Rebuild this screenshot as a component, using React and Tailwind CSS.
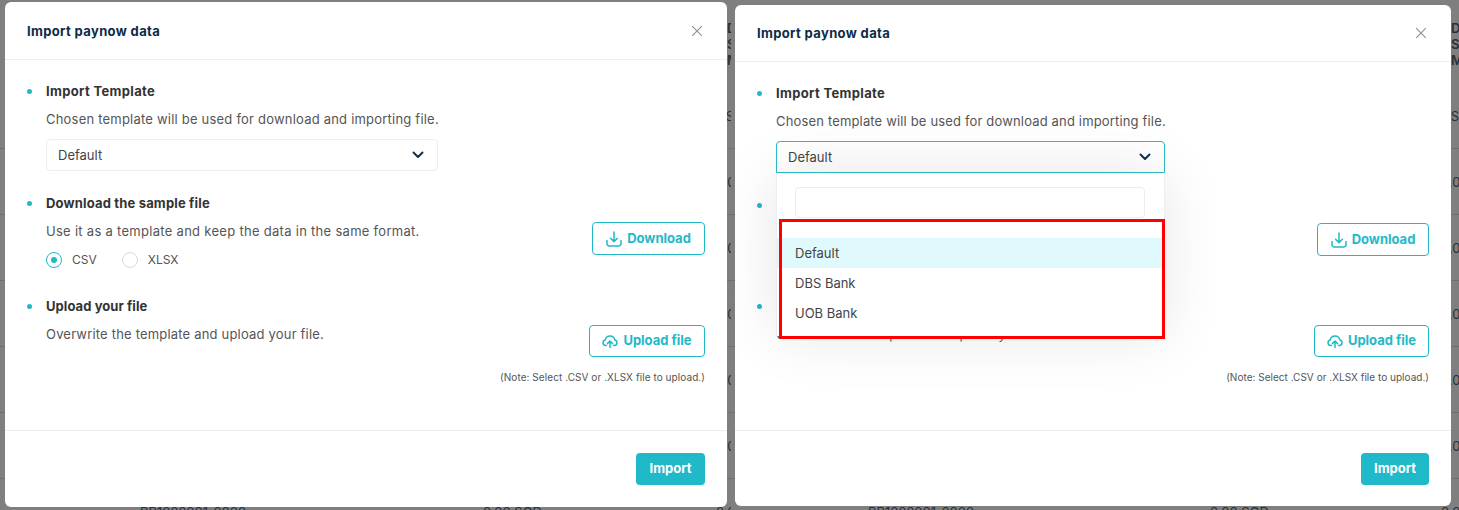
import React from 'react';

const DownloadIcon = ({ className = '' }) => (
    <svg viewBox="0 0 16 16" fill="none" stroke="currentColor" strokeWidth="1.5" strokeLinecap="round" strokeLinejoin="round" className={className} aria-hidden="true">
        <path d="M8 1v9.5M4.6 7.2 8 10.6l3.4-3.4" />
        <path d="M1 9.5v3.2A2.3 2.3 0 0 0 3.3 15h9.4a2.3 2.3 0 0 0 2.3-2.3V9.5" />
    </svg>
);

const UploadIcon = ({ className = '' }) => (
    <svg viewBox="0 0 16 16" fill="none" stroke="currentColor" strokeWidth="1.5" strokeLinecap="round" strokeLinejoin="round" className={className} aria-hidden="true">
        <path d="M4.4 12.6H3.6A2.9 2.9 0 0 1 3.2 6.9a4.9 4.9 0 0 1 9.6 0 2.9 2.9 0 0 1-.4 5.7h-.8" />
        <path d="M8 14.6V8.2M5.4 10.6 8 8l2.6 2.6" />
    </svg>
);

const CloseIcon = () => (
    <svg viewBox="0 0 16 16" fill="none" stroke="currentColor" strokeWidth="1.1" className="h-4 w-4 text-[#8f8f8f]" aria-hidden="true">
        <path d="M3.2 3.2l9.6 9.6M12.8 3.2l-9.6 9.6" />
    </svg>
);

const Chevron = () => (
    <svg viewBox="0 0 12 8" fill="none" stroke="#12304d" strokeWidth="2" strokeLinecap="round" strokeLinejoin="round" className="h-[8px] w-[12px]" aria-hidden="true">
        <path d="M1.5 1.5 6 6l4.5-4.5" />
    </svg>
);

const rows = ['US.', '0.00 SGD', '0.00 SGD', '0.00 SGD', '0.00 SGD', '0.00 SGD'];

// dimmed table behind the modal, only its edges show
function Backdrop({ headerPad, gridClass }) {
    return (
        <div className="text-[13px] leading-[16px] text-[#27303a]">
            <div className={`flex h-[83px] flex-col pt-[20px] font-semibold ${headerPad}`}>
                <span>DI</span>
                <span>S</span>
                <span>M</span>
            </div>
            {rows.map((value, i) => (
                <div key={i} className={`grid h-[66px] items-center border-b border-[#6e6e6e] ${gridClass}`}>
                    <span className="col-start-4 whitespace-nowrap">{value}</span>
                </div>
            ))}
            <div className={`grid h-[66px] items-center ${gridClass}`}>
                <span>BB1022001_0002</span>
                <span>0.00 SGD</span>
                <span>-</span>
                <span className="whitespace-nowrap">0.00 SGD</span>
            </div>
        </div>
    );
}

function Heading({ children, className }) {
    return (
        <div className={`relative h-[20px] text-[13px] font-bold leading-[20px] text-[#333] ${className}`}>
            <span className="absolute left-[-19px] top-[8px] h-[5px] w-[5px] rounded-full bg-[#1fb9c9]" />
            {children}
        </div>
    );
}

const Desc = ({ children, className }) => (
    <div className={`mt-[8px] h-[20px] whitespace-nowrap text-[13px] leading-[20px] text-[#555] ${className}`}>{children}</div>
);

function Radio({ label, checked }) {
    return (
        <div className="flex items-center gap-[10px]">
            <span className={`flex h-[16px] w-[16px] items-center justify-center rounded-full border ${checked ? 'border-[#1fb9c9]' : 'border-[#d9d9d9]'}`}>
                {checked && <span className="h-[6px] w-[6px] rounded-full bg-[#1fb9c9]" />}
            </span>
            <span className="text-[12px] leading-[20px] text-[#555]">{label}</span>
        </div>
    );
}

function OutlineButton({ icon, label, className = '' }) {
    return (
        <button type="button" className={`flex items-center justify-center gap-[5px] rounded-[4px] border border-[#1fb9c9] bg-white text-[13px] font-bold text-[#1fb9c9] ${className}`}>
            {icon}
            {label}
        </button>
    );
}

function Dropdown() {
    return (
        <div className="absolute left-0 top-[32px] z-10 h-[163px] w-[389px] border-x border-[#eeeeee] bg-white pt-[14px] shadow-[0_0_60px_rgba(0,0,0,0.1)]">
            <div className="ml-[18px] h-[31px] w-[350px] rounded-[4px] border border-[#ececec]" />
            <div className="mt-[20px] text-[13px] text-[#444]">
                <div className="h-[30px] bg-[#dff9fc] pl-[18px] leading-[30px]">Default</div>
                <div className="h-[30px] pl-[18px] leading-[30px]">DBS Bank</div>
                <div className="h-[30px] pl-[18px] leading-[30px]">UOB Bank</div>
            </div>
            {/* red annotation round the options */}
            <div className="absolute left-[2px] top-[46px] h-[120px] w-[386px] border-[3px] border-[#ff0000]" />
        </div>
    );
}

function Modal({ open, className, headerClass, footerClass, selectWidth, firstDescClass, noteClass, section2Class, section3Class, downloadClass, uploadClass, importClass }) {
    return (
        <div className={`absolute flex flex-col rounded-[6px] bg-white ${className}`}>
            <div className={`flex shrink-0 items-center justify-between border-b border-[#eeeeee] pl-[22px] pr-[22px] ${headerClass}`}>
                <div className="pt-[2px] text-[13px] font-bold tracking-[0.36px] text-[#0d2b47]">Import paynow data</div>
                <CloseIcon />
            </div>
            <div className="flex-1 pl-[41px] pr-[22px]">
                <div className="pt-[21px]">
                    <Heading className="tracking-[0.34px]">Import Template</Heading>
                    <Desc className={firstDescClass}>Chosen template will be used for download and importing file.</Desc>
                    <div className={`relative mt-[10px] ${selectWidth}`}>
                        <div className={`flex h-[32px] items-center justify-between rounded-[4px] border pl-[11px] pr-[13px] text-[13px] text-[#444] ${open ? 'rounded-b-none border-[#2bbccb]' : 'border-[#eeeeee]'}`}>
                            <span className="pt-[2px]">Default</span>
                            <Chevron />
                        </div>
                        {open && <Dropdown />}
                    </div>
                </div>
                <div className={`flex items-start justify-between ${section2Class}`}>
                    <div>
                        <Heading className="tracking-[0.17px]">Download the sample file</Heading>
                        <Desc className="tracking-[0.29px]">Use it as a template and keep the data in the same format.</Desc>
                        <div className="mt-[9px] flex h-[20px] items-center gap-[25px]">
                            <Radio label="CSV" checked />
                            <Radio label="XLSX" />
                        </div>
                    </div>
                    <OutlineButton icon={<DownloadIcon className="h-4 w-4" />} label="Download" className={`h-[33px] ${downloadClass}`} />
                </div>
                <div className={`flex items-start justify-between ${section3Class}`}>
                    <div>
                        <Heading className="tracking-[0.07px]">Upload your file</Heading>
                        <Desc className="tracking-[0.19px]">Overwrite the template and upload your file.</Desc>
                    </div>
                    <div className="mt-[29px] flex flex-col items-end">
                        <OutlineButton icon={<UploadIcon className="h-4 w-4" />} label="Upload file" className={`h-[32px] ${uploadClass}`} />
                        <div className={`mt-[12px] h-[16px] whitespace-nowrap text-[10px] leading-[16px] text-[#555] ${noteClass}`}>(Note: Select .CSV or .XLSX file to upload.)</div>
                    </div>
                </div>
            </div>
            <div className={`flex shrink-0 items-center justify-end border-t border-[#eeeeee] pr-[22px] ${footerClass}`}>
                <button type="button" className={`h-[32px] rounded-[4px] bg-[#1fb9c9] text-[13px] font-bold text-white ${importClass}`}>Import</button>
            </div>
        </div>
    );
}

export default function App() {
    return (
        <div className="flex h-[510px] w-[1459px] overflow-hidden bg-[#7f7f7f] font-[Inter,sans-serif]">
            <div className="relative h-[510px] w-[731px] shrink-0 overflow-hidden">
                <Backdrop headerPad="pl-[727px]" gridClass="grid-cols-[343px_94px_139px_100px] pl-[140px]" />
                <Modal
                    className="left-[5px] top-[2px] h-[505px] w-[722px]"
                    headerClass="h-[58px]"
                    footerClass="h-[77px]"
                    selectWidth="w-[392px]"
                    firstDescClass="tracking-[0.21px]"
                    noteClass="tracking-[0.07px]"
                    section2Class="mt-[22px]"
                    section3Class="mt-[26px]"
                    downloadClass="mt-[29px] w-[113px]"
                    uploadClass="w-[116px]"
                    importClass="w-[69px]"
                />
            </div>
            <div className="relative h-[510px] w-[728px] shrink-0 overflow-hidden">
                <Backdrop headerPad="pl-[720px]" gridClass="grid-cols-[342px_94px_137px_100px] pl-[137px]" />
                <Modal
                    open
                    className="left-[4px] top-[5px] h-[501px] w-[716px]"
                    headerClass="h-[57px]"
                    footerClass="h-[76px]"
                    selectWidth="w-[389px]"
                    firstDescClass="tracking-[0.16px]"
                    noteClass="tracking-[0.02px]"
                    section2Class="mt-[22px]"
                    section3Class="mt-[24px]"
                    downloadClass="mt-[28px] w-[112px]"
                    uploadClass="w-[115px]"
                    importClass="w-[68px]"
                />
            </div>
        </div>
    );
}
